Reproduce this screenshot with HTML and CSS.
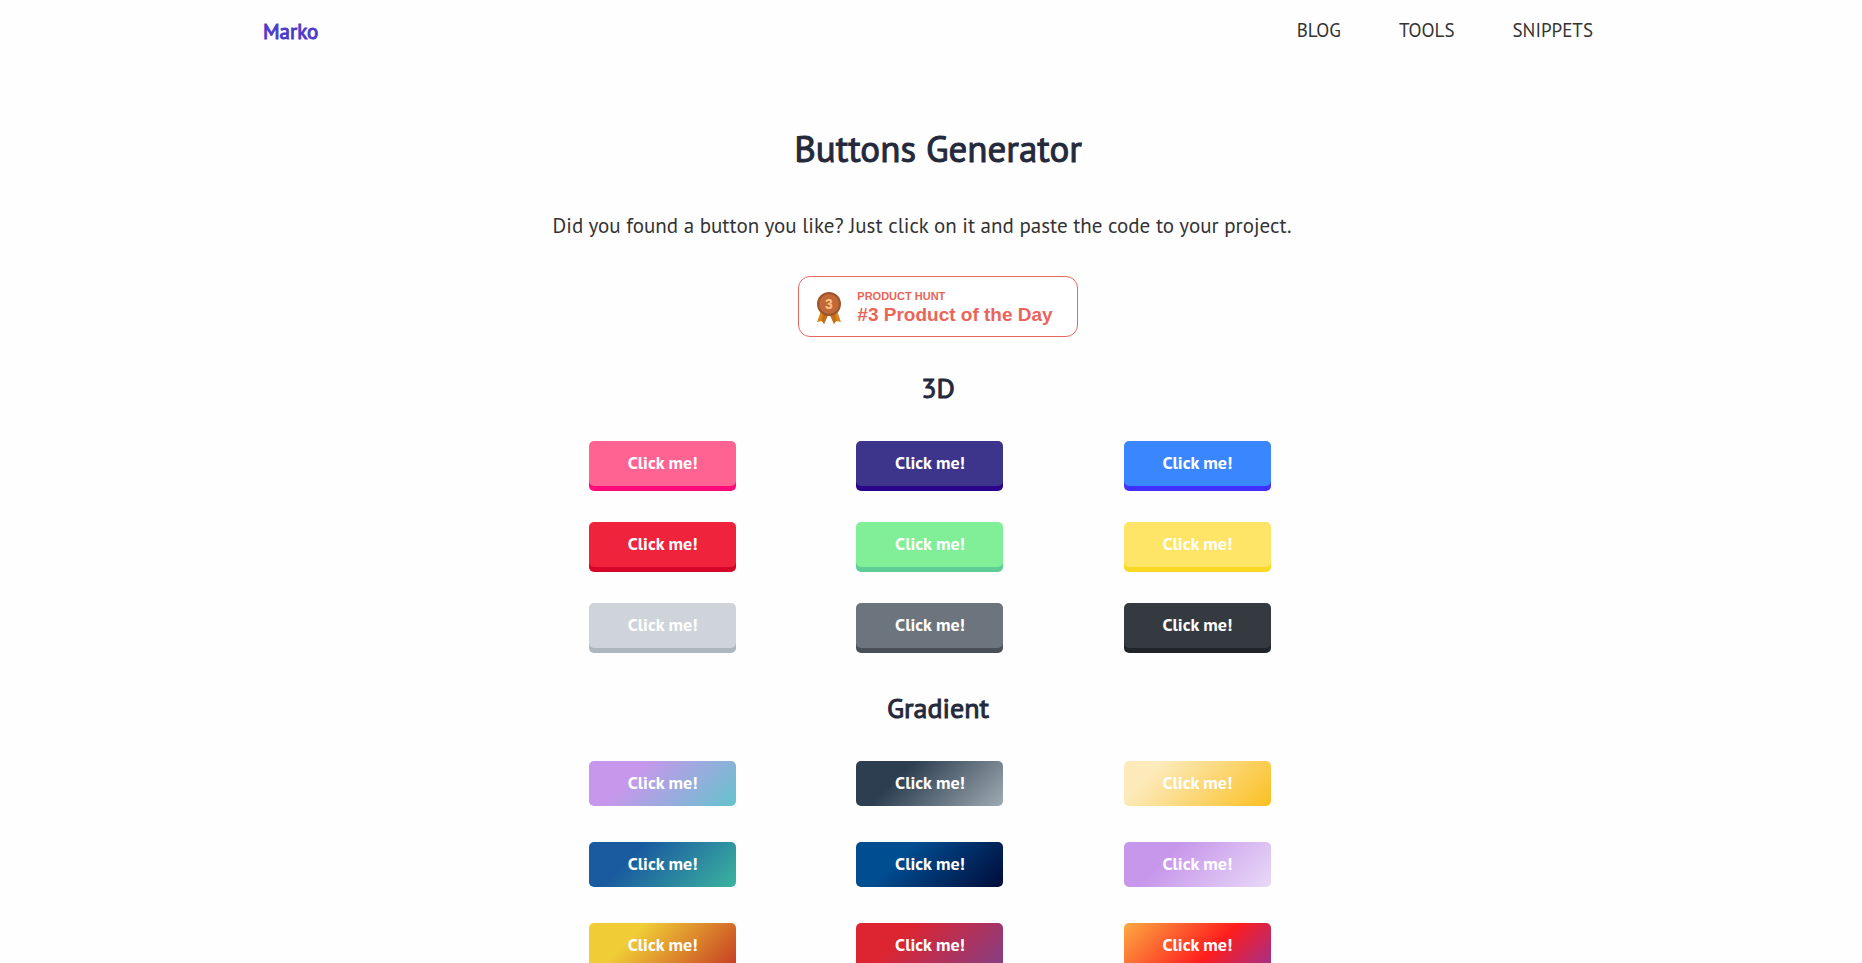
FILE: index.html
```html
<!DOCTYPE html>
<html lang="en">
<head>
<meta charset="utf-8">
<meta name="viewport" content="width=device-width, initial-scale=1">
<title>Buttons Generator</title>
<link rel="stylesheet" href="styles.css">
</head>
<body>
<header class="header">
  <a class="brand" href="#">Marko</a>
  <nav class="nav">
    <a href="#">BLOG</a>
    <a href="#">TOOLS</a>
    <a href="#">SNIPPETS</a>
  </nav>
</header>
<main class="main">
  <h1 class="title">Buttons Generator</h1>
  <p class="intro">Did you found a button you like? Just click on it and paste the code to your project.</p>
  <div class="badge-row">
    <a class="badge" href="#">
      <svg class="medal" viewBox="0 0 24 32" aria-hidden="true">
        <path d="M4 19 0 30l5-1 2 3 4-9h2l4 9 2-3 5 1-4-11z" fill="#dc8420"/>
        <path d="m6 23-2 6 1 0 2 3 4-9zM18 23l2 6-1 0-2 3-4-9z" fill="#c46f1a"/>
        <circle cx="12" cy="12" r="12" fill="#9c542c"/>
        <circle cx="12" cy="12" r="10" fill="#c2693a"/>
        <text class="medal-number" x="12" y="17" text-anchor="middle">3</text>
      </svg>
      <span class="badge-text">
        <span class="badge-label">PRODUCT HUNT</span>
        <span class="badge-award">#3 Product of the Day</span>
      </span>
    </a>
  </div>
  <section class="group">
    <h2 class="subtitle">3D</h2>
    <div class="grid">
      <button class="btn raised pink" type="button">Click me!</button>
      <button class="btn raised indigo" type="button">Click me!</button>
      <button class="btn raised blue" type="button">Click me!</button>
      <button class="btn raised red" type="button">Click me!</button>
      <button class="btn raised green" type="button">Click me!</button>
      <button class="btn raised yellow" type="button">Click me!</button>
      <button class="btn raised silver" type="button">Click me!</button>
      <button class="btn raised gray" type="button">Click me!</button>
      <button class="btn raised dark" type="button">Click me!</button>
    </div>
  </section>
  <section class="group">
    <h2 class="subtitle">Gradient</h2>
    <div class="grid">
      <button class="btn lilac-teal" type="button">Click me!</button>
      <button class="btn slate" type="button">Click me!</button>
      <button class="btn cream" type="button">Click me!</button>
      <button class="btn ocean" type="button">Click me!</button>
      <button class="btn navy" type="button">Click me!</button>
      <button class="btn lilac" type="button">Click me!</button>
      <button class="btn amber" type="button">Click me!</button>
      <button class="btn berry" type="button">Click me!</button>
      <button class="btn sunset" type="button">Click me!</button>
    </div>
  </section>
</main>
</body>
</html>
```
FILE: styles.css
```css
* { box-sizing: border-box; }

body {
  margin: 0;
  background: #fefefe;
  color: #333;
  font-family: "PT Sans", "Noto Sans", sans-serif;
}

a { color: inherit; text-decoration: none; }

.header {
  display: flex;
  justify-content: space-between;
  align-items: flex-start;
  max-width: 1336px;
  margin: 0 auto;
  padding: 16px 6px 0 0;
}

.brand {
  padding-top: 2px;
  color: #4b3bcb;
  font-size: 21px;
  line-height: 28px;
  -webkit-text-stroke: 1px currentColor;
}

.nav {
  display: flex;
  gap: 58px;
  font-size: 19px;
  line-height: 28px;
}

.title,
.subtitle {
  margin: 0;
  padding-left: 14px;
  color: #25293c;
  font-weight: 400;
  text-align: center;
  -webkit-text-stroke: 1px currentColor;
}

.title {
  margin-top: 78px;
  font-size: 37px;
  line-height: 48px;
}

.intro {
  margin: 40px 0 0;
  padding-right: 18px;
  font-size: 21px;
  line-height: 28px;
  text-align: center;
}

.badge-row {
  display: flex;
  justify-content: center;
  margin-top: 36px;
  padding-left: 14px;
}

.badge {
  display: flex;
  align-items: center;
  gap: 16px;
  padding: 12px 24px 9px 18px;
  border: 1px solid #e4685f;
  border-radius: 12px;
  background: #fff;
  color: #ea6459;
  font-family: "Liberation Sans", Arial, sans-serif;
  font-weight: 700;
}

.medal { width: 24px; height: 32px; }

.medal-number { fill: #ffc484; font-size: 14px; }

.badge-text { display: flex; flex-direction: column; }

.badge-label { font-size: 11px; line-height: 14px; }

.badge-award { font-size: 19px; line-height: 24px; }

.subtitle {
  font-size: 28px;
  line-height: 40px;
}

.group { margin-top: 31px; }

.group + .group { margin-top: 40px; }

.grid {
  display: grid;
  grid-template-columns: repeat(3, 1fr);
  justify-items: center;
  gap: 36px 0;
  max-width: 804px;
  margin: 33px auto 0;
  padding-right: 2px;
}

.btn {
  width: 147px;
  height: 45px;
  padding: 0;
  border: 0;
  border-radius: 5px;
  color: #fff;
  font-family: inherit;
  font-size: 18px;
  font-weight: 700;
  line-height: 24px;
}

.pink { background: #ff6392; box-shadow: 0 5px #ff0a78; }
.indigo { background: #3d348b; box-shadow: 0 5px #2a058b; }
.blue { background: #3a86ff; box-shadow: 0 5px #4230ff; }
.red { background: #f0233d; box-shadow: 0 5px #d50628; }
.green { background: #80ef98; box-shadow: 0 5px #5fce96; }
.yellow { background: #ffe567; box-shadow: 0 5px #fad925; }
.silver { background: #ced4da; box-shadow: 0 5px #adb5bd; }
.gray { background: #6c757d; box-shadow: 0 5px #495057; }
.dark { background: #343a40; box-shadow: 0 5px #212529; }

.btn { padding-bottom: 2px; }

.lilac-teal { background: linear-gradient(135deg, #c797eb 30%, #64c3cd); }
.slate { background: linear-gradient(135deg, #2c3e50 30%, #9faab2); }
.cream { background: linear-gradient(135deg, #fceabb 20%, #fabf21); }
.ocean { background: linear-gradient(135deg, #1a5a9f 30%, #3cb4a0); }
.navy { background: linear-gradient(135deg, #004e92 30%, #000c3a); }
.lilac { background: linear-gradient(135deg, #c797eb 30%, #e8d9f7); }
.amber { background: linear-gradient(135deg, #f0cc36 30%, #c63b22); }
.berry { background: linear-gradient(135deg, #dd2531 30%, #833f87); }
.sunset { background: linear-gradient(135deg, #fcaa42, #fd1d1d 60%, #a0308d); }
```
